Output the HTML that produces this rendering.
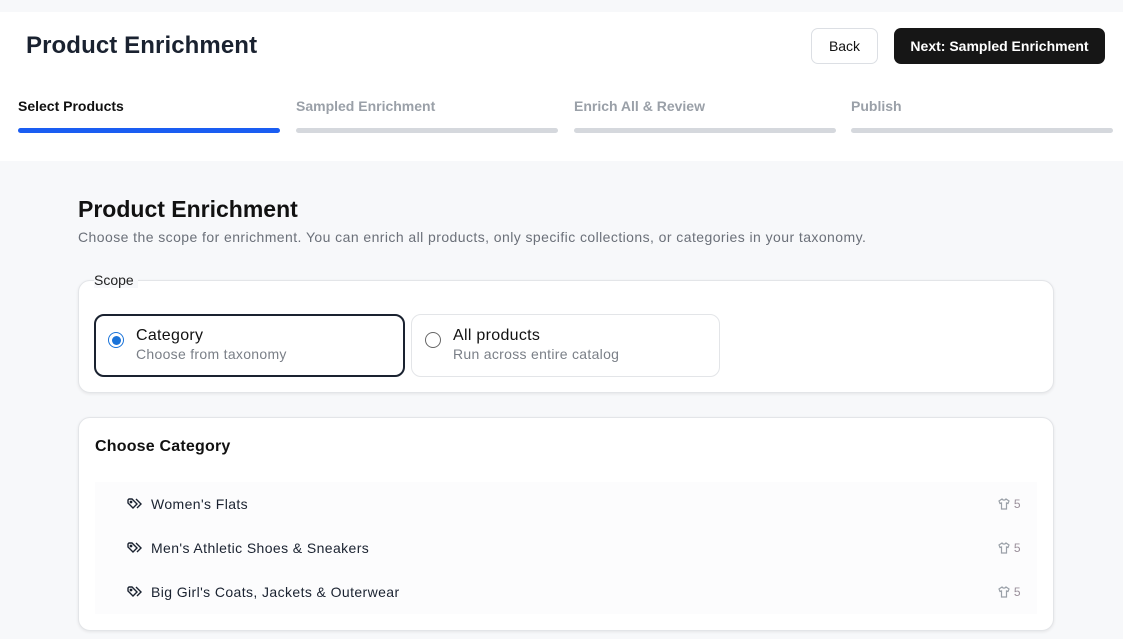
<!DOCTYPE html>
<html><head><style>
*{box-sizing:border-box;margin:0;padding:0}
body{width:1123px;height:639px;overflow:hidden;background:#f7f8fa;font-family:"Liberation Sans",sans-serif;color:#111;position:relative}
.top{position:absolute;left:0;top:12px;width:1123px;height:149px;background:#fff}
h1{position:absolute;left:26px;top:32px;font-size:24px;font-weight:700;color:#1a2230;letter-spacing:0.1px}
.back{position:absolute;left:811px;top:28px;width:67px;height:36px;border:1px solid #dcdfe4;border-radius:7px;background:#fff;font-size:14px;display:flex;align-items:center;justify-content:center;color:#111}
.next{position:absolute;left:894px;top:28px;width:211px;height:36px;border-radius:7px;background:#161616;color:#fff;font-size:14px;font-weight:700;display:flex;align-items:center;justify-content:center}
.step{position:absolute;top:98px;font-size:14px;font-weight:700;color:#9aa0a8}
.bar{position:absolute;top:128px;height:5px;border-radius:3px;background:#d5d8dd;width:262px}
h2{position:absolute;left:78px;top:196px;font-size:23px;font-weight:700;color:#111;letter-spacing:0}
.sub{position:absolute;left:78px;top:229px;font-size:14px;color:#6b7079;letter-spacing:0.43px}
.lbl{position:absolute;left:94px;top:272px;font-size:14px;color:#222}
.card{position:absolute;left:78px;width:976px;background:#fff;border:1px solid #e3e5e8;border-radius:12px;box-shadow:0 1px 3px rgba(0,0,0,.08)}
.opt{position:absolute;top:314px;height:63px;border-radius:10px;background:#fff}
.opt .t{position:absolute;left:41px;top:12px;font-size:16px;color:#111;letter-spacing:0.3px}
.opt .d{position:absolute;left:41px;top:31px;font-size:14px;color:#7a7f87;letter-spacing:0.3px}
.rad{position:absolute;left:13px;top:17px;width:16px;height:16px;border-radius:50%;border:1.5px solid #666}
.row{position:absolute;left:95px;width:942px;height:44px;background:#fcfcfd;font-size:14px;color:#1a2230;letter-spacing:0.4px}
.row span.n{position:absolute;left:56px;top:14px}
.row svg.tag{position:absolute;left:32px;top:16px}
.row .c{position:absolute;right:16px;top:15px;font-size:12px;color:#9a8f9a;display:flex;align-items:center;gap:4px}
</style></head><body>
<div class="top"></div>
<h1>Product Enrichment</h1>
<div class="back">Back</div>
<div class="next">Next: Sampled Enrichment</div>
<div class="step" style="left:18px;color:#111">Select Products</div>
<div class="step" style="left:296px">Sampled Enrichment</div>
<div class="step" style="left:574px">Enrich All &amp; Review</div>
<div class="step" style="left:851px">Publish</div>
<div class="bar" style="left:18px;background:#1a5df2"></div>
<div class="bar" style="left:296px"></div>
<div class="bar" style="left:574px"></div>
<div class="bar" style="left:851px"></div>
<h2>Product Enrichment</h2>
<div class="sub">Choose the scope for enrichment. You can enrich all products, only specific collections, or categories in your taxonomy.</div>
<div class="card" style="top:280px;height:113px"></div>
<div class="lbl" style="background:#f7f8fa;padding-right:4px">Scope</div>
<div class="opt" style="left:94px;width:311px;border:2px solid #1a2230">
<div class="rad" style="left:12px;top:16px;border:1.5px solid #1a73d9;display:flex;align-items:center;justify-content:center"><div style="width:9px;height:9px;border-radius:50%;background:#1a73d9"></div></div>
<div class="t" style="left:40px;top:11px">Category</div><div class="d" style="left:40px;top:30px">Choose from taxonomy</div></div>
<div class="opt" style="left:411px;width:309px;border:1px solid #e3e5e8">
<div class="rad"></div><div class="t">All products</div><div class="d">Run across entire catalog</div></div>
<div class="card" style="top:417px;height:214px"></div>
<div style="position:absolute;left:95px;top:438px;font-size:16px;font-weight:700;color:#111;letter-spacing:0.2px">Choose Category</div>
<div class="row" style="top:482px"><svg class="tag" width="16" height="12" viewBox="0 0 16 12" fill="none" stroke="#1a2230" stroke-width="1.4"><path d="M1 2v3l5 5 4-4-5-5H2z"/><circle cx="4" cy="4" r=".7"/><path d="M9 1l5 5-4 4"/></svg><span class="n">Women's Flats</span><span class="c"><svg width="12" height="12" viewBox="0 0 12 12" fill="none" stroke="#9aa0a8" stroke-width="1.2"><path d="M4 1L1 3l1 2.5 1.5-.5V11h5V5l1.5.5L11 3 8 1C7 2.5 5 2.5 4 1z"/></svg>5</span></div>
<div class="row" style="top:526px"><svg class="tag" width="16" height="12" viewBox="0 0 16 12" fill="none" stroke="#1a2230" stroke-width="1.4"><path d="M1 2v3l5 5 4-4-5-5H2z"/><circle cx="4" cy="4" r=".7"/><path d="M9 1l5 5-4 4"/></svg><span class="n">Men's Athletic Shoes &amp; Sneakers</span><span class="c"><svg width="12" height="12" viewBox="0 0 12 12" fill="none" stroke="#9aa0a8" stroke-width="1.2"><path d="M4 1L1 3l1 2.5 1.5-.5V11h5V5l1.5.5L11 3 8 1C7 2.5 5 2.5 4 1z"/></svg>5</span></div>
<div class="row" style="top:570px"><svg class="tag" width="16" height="12" viewBox="0 0 16 12" fill="none" stroke="#1a2230" stroke-width="1.4"><path d="M1 2v3l5 5 4-4-5-5H2z"/><circle cx="4" cy="4" r=".7"/><path d="M9 1l5 5-4 4"/></svg><span class="n">Big Girl's Coats, Jackets &amp; Outerwear</span><span class="c"><svg width="12" height="12" viewBox="0 0 12 12" fill="none" stroke="#9aa0a8" stroke-width="1.2"><path d="M4 1L1 3l1 2.5 1.5-.5V11h5V5l1.5.5L11 3 8 1C7 2.5 5 2.5 4 1z"/></svg>5</span></div>
</body></html>
